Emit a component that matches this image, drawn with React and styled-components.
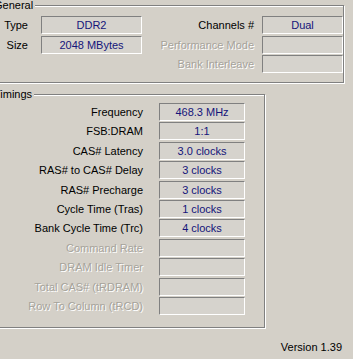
import React from "react";
import styled, { createGlobalStyle } from "styled-components";

const GlobalStyle = createGlobalStyle`
  html, body {
    margin: 0;
    padding: 0;
    background: #d4d0c8;
    overflow: hidden;
  }
  body {
    font-family: "Liberation Sans", Arial, sans-serif;
    font-size: 11px;
    color: #000;
  }
`;

const Page = styled.div`
  width: 353px;
  height: 359px;
  padding-top: 5px;
  box-sizing: border-box;
  display: flex;
  flex-direction: column;
`;

const Group = styled.div`
  position: relative;
  box-sizing: border-box;
  margin-left: -15px;
  width: ${(p) => p.$width}px;
  height: ${(p) => p.$height}px;
  margin-top: ${(p) => p.$top || 0}px;
  border: 1px solid #808080;
  box-shadow: inset 1px 1px 0 #fff, 1px 1px 0 #fff;
`;

const GroupTitle = styled.span`
  position: absolute;
  left: 7px;
  top: -8px;
  padding: 0 2px 0 1px;
  background: #d4d0c8;
  line-height: 14px;
`;

const GeneralBody = styled.div`
  display: flex;
  justify-content: space-between;
  padding: 10px 2px 0 0;
`;

const Column = styled.div`
  display: flex;
  flex-direction: column;
  gap: ${(p) => p.$gap}px;
`;

const Row = styled.div`
  display: flex;
  align-items: center;
`;

const Label = styled.span`
  box-sizing: border-box;
  width: ${(p) => p.$width}px;
  padding-right: ${(p) => p.$gap}px;
  text-align: right;
  white-space: nowrap;
  color: ${(p) => (p.$disabled ? "#a6a39b" : "#000")};
  text-shadow: ${(p) => (p.$disabled ? "1px 1px 0 #fff" : "none")};
`;

const Field = styled.div`
  box-sizing: border-box;
  width: ${(p) => p.$width}px;
  height: 18px;
  border-top: 1px solid #808080;
  border-left: 1px solid #808080;
  border-bottom: 1px solid #fff;
  border-right: 1px solid #fff;
  background: #d6d3cd;
  color: #14147a;
  text-align: center;
  line-height: 16px;
  white-space: nowrap;
`;

const TimingsBody = styled.div`
  padding-top: 8px;
`;

const Footer = styled.div`
  display: flex;
  justify-content: flex-end;
  padding-right: 11px;
  margin-top: 13px;
  line-height: 13px;
`;

const generalLeft = [
  ["Type", "DDR2"],
  ["Size", "2048 MBytes"],
];

const generalRight = [
  ["Channels #", "Dual", false],
  ["Performance Mode", "", true],
  ["Bank Interleave", "", true],
];

const timings = [
  ["Frequency", "468.3 MHz"],
  ["FSB:DRAM", "1:1"],
  ["CAS# Latency", "3.0 clocks"],
  ["RAS# to CAS# Delay", "3 clocks"],
  ["RAS# Precharge", "3 clocks"],
  ["Cycle Time (Tras)", "1 clocks"],
  ["Bank Cycle Time (Trc)", "4 clocks"],
  ["Command Rate", "", true],
  ["DRAM Idle Timer", "", true],
  ["Total CAS# (tRDRAM)", "", true],
  ["Row To Column (tRCD)", "", true],
];

export default function App() {
  return (
    <>
      <GlobalStyle />
      <Page>
        <Group $width={359} $height={78}>
          <GroupTitle>General</GroupTitle>
          <GeneralBody>
            <Column $gap={1.5}>
              {generalLeft.map(([label, value]) => (
                <Row key={label}>
                  <Label $width={55} $gap={13}>{label}</Label>
                  <Field $width={101}>{value}</Field>
                </Row>
              ))}
            </Column>
            <Column $gap={1.5}>
              {generalRight.map(([label, value, disabled]) => (
                <Row key={label}>
                  <Label $width={120} $gap={8} $disabled={disabled}>{label}</Label>
                  <Field $width={81}>{value}</Field>
                </Row>
              ))}
            </Column>
          </GeneralBody>
        </Group>

        <Group $width={280} $height={234} $top={11}>
          <GroupTitle>Timings</GroupTitle>
          <TimingsBody>
            <Column $gap={1.4}>
              {timings.map(([label, value, disabled]) => (
                <Row key={label}>
                  <Label $width={173} $gap={16} $disabled={disabled}>{label}</Label>
                  <Field $width={86}>{value}</Field>
                </Row>
              ))}
            </Column>
          </TimingsBody>
        </Group>

        <Footer>Version 1.39</Footer>
      </Page>
    </>
  );
}
